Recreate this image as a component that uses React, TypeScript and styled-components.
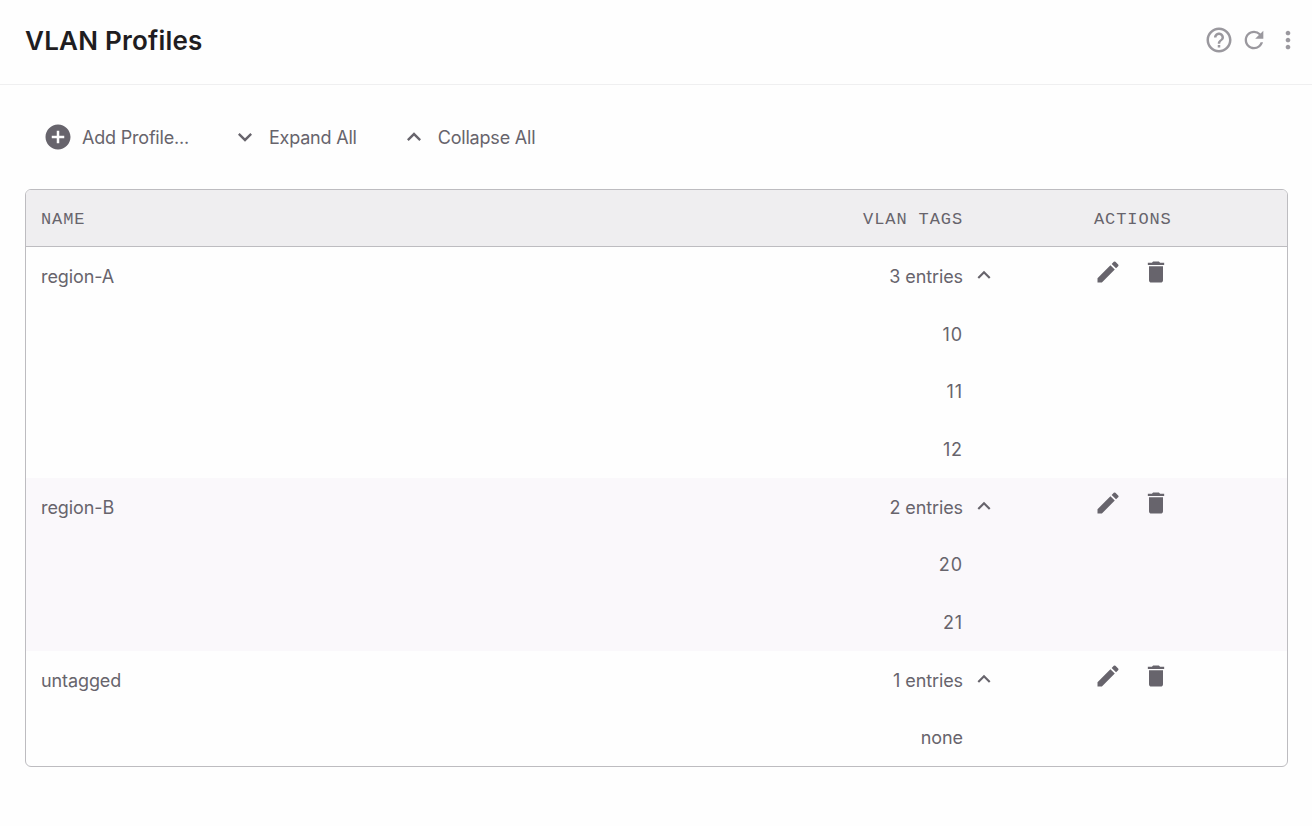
import React from "react";
import styled, { createGlobalStyle } from "styled-components";
import {
  MdAddCircle,
  MdDelete,
  MdEdit,
  MdHelpOutline,
  MdKeyboardArrowDown,
  MdKeyboardArrowUp,
  MdMoreVert,
  MdRefresh,
} from "react-icons/md";

const Global = createGlobalStyle`
  html, body { margin: 0; padding: 0; background: #fefefe; }
  body { font-family: Inter, "Liberation Sans", sans-serif; color: #67646c; }
  * { box-sizing: border-box; }
`;

const Page = styled.div`
  width: 1312px;
  height: 826px;
  overflow: hidden;
`;

const Header = styled.header`
  height: 85px;
  border-bottom: 1px solid #efeff0;
  display: flex;
  align-items: center;
  justify-content: space-between;
  padding: 0 9px 4px 25px;
`;

const Title = styled.h1`
  margin: 0;
  font-size: 26px;
  font-weight: 600;
  letter-spacing: 0.22px;
  color: #1f1d21;
`;

const HeaderIcons = styled.div`
  display: flex;
  align-items: center;
  color: #9a989e;
`;

const HeaderIcon = styled.span<{ $w: number }>`
  width: ${(p) => p.$w}px;
  display: flex;
  justify-content: center;
`;

const Toolbar = styled.div`
  display: flex;
  align-items: center;
  height: 40px;
  margin: 32px 0 0 43px;
`;

const ToolButton = styled.button<{ $gap: number; $mr: number }>`
  border: 0;
  background: none;
  padding: 0;
  display: flex;
  align-items: center;
  gap: ${(p) => p.$gap}px;
  margin-right: ${(p) => p.$mr}px;
  font: inherit;
  font-size: 18px;
  letter-spacing: -0.2px;
  color: #67646c;
`;

const TableBox = styled.div`
  margin: 32px 24px 0 25px;
  border: 1px solid #bdbcc0;
  border-radius: 6px;
  overflow: hidden;
`;

const Columns = styled.div`
  display: grid;
  grid-template-columns: 1fr 256px 264px;
`;

const HeadRow = styled(Columns)`
  height: 57px;
  padding-top: 2px;
  background: #efeef0;
  border-bottom: 1px solid #bdbcc0;
  align-items: center;
  font-family: "Liberation Mono", monospace;
  font-size: 17px;
  letter-spacing: 0.9px;
  color: #67646c;
`;

const HeadName = styled.div`
  padding-left: 15px;
`;

const HeadTags = styled.div`
  padding-right: 60px;
  text-align: right;
`;

const HeadActions = styled.div`
  padding-left: 71px;
`;

const Group = styled.div<{ $shade?: boolean }>`
  background: ${(p) => (p.$shade ? "#faf8fb" : "transparent")};
`;

const Row = styled(Columns)`
  height: 57.7px;
  align-items: center;
  font-size: 18px;
  letter-spacing: -0.1px;
  color: #67646c;
`;

const NameCell = styled.div`
  padding: 1px 0 0 15px;
`;

const TagCell = styled.div<{ $digits?: boolean }>`
  display: flex;
  justify-content: flex-end;
  align-items: center;
  padding: 1px 60px 0 0;
  position: relative;
  letter-spacing: ${(p) => (p.$digits ? "0.9px" : "inherit")};
`;

const Chevron = styled(MdKeyboardArrowUp)`
  position: absolute;
  right: 26px;
  top: 50%;
  margin-top: -14px;
`;

const ActionCell = styled.div`
  display: flex;
  align-items: center;
  padding: 0 0 8px 71px;
  gap: 20px;
`;

type Profile = { name: string; tags: string[] };

const profiles: Profile[] = [
  { name: "region-A", tags: ["10", "11", "12"] },
  { name: "region-B", tags: ["20", "21"] },
  { name: "untagged", tags: ["none"] },
];

export default function App() {
  return (
    <Page>
      <Global />
      <Header>
        <Title>VLAN Profiles</Title>
        <HeaderIcons>
          <HeaderIcon $w={32}><MdHelpOutline size={30} /></HeaderIcon>
          <HeaderIcon $w={38}><MdRefresh size={28} /></HeaderIcon>
          <HeaderIcon $w={30}><MdMoreVert size={28} /></HeaderIcon>
        </HeaderIcons>
      </Header>
      <Toolbar>
        <ToolButton $gap={9} $mr={42}><MdAddCircle size={30} />Add Profile...</ToolButton>
        <ToolButton $gap={10} $mr={43}><MdKeyboardArrowDown size={28} />Expand All</ToolButton>
        <ToolButton $gap={10} $mr={0}><MdKeyboardArrowUp size={28} />Collapse All</ToolButton>
      </Toolbar>
      <TableBox>
        <HeadRow>
          <HeadName>NAME</HeadName>
          <HeadTags>VLAN TAGS</HeadTags>
          <HeadActions>ACTIONS</HeadActions>
        </HeadRow>
        {profiles.map((p, i) => (
          <Group key={p.name} $shade={i === 1}>
            <Row>
              <NameCell>{p.name}</NameCell>
              <TagCell>
                {p.tags.length} entries
                <Chevron size={26} />
              </TagCell>
              <ActionCell>
                <MdEdit size={28} />
                <MdDelete size={28} />
              </ActionCell>
            </Row>
            {p.tags.map((t) => (
              <Row key={t}>
                <div />
                <TagCell $digits={/\d/.test(t)}>{t}</TagCell>
                <div />
              </Row>
            ))}
          </Group>
        ))}
      </TableBox>
    </Page>
  );
}
